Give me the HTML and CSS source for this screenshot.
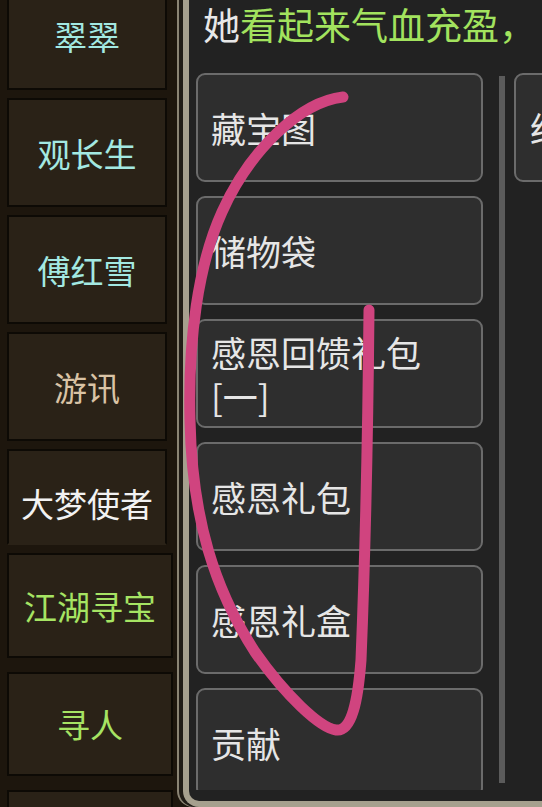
FILE: index.html
```html
<!DOCTYPE html>
<html lang="zh-CN">
<head>
  <meta charset="UTF-8" />
  <meta name="viewport" content="width=device-width, initial-scale=1" />
  <title>NPC</title>
  <link rel="stylesheet" href="styles.css">
</head>
<body>
  <div class="screen">
    <nav class="npc-list">
      <div class="npc npc-cyan">翠翠</div>
      <div class="npc npc-cyan">观长生</div>
      <div class="npc npc-cyan">傅红雪</div>
      <div class="npc npc-tan">游讯</div>
      <div class="npc npc-white">大梦使者</div>
      <div class="npc npc-green">江湖寻宝</div>
      <div class="npc npc-green">寻人</div>
      <div class="npc"></div>
    </nav>

    <section class="panel">
      <p class="panel-title"><span class="speaker">她</span><span class="status">看起来气血充盈，</span></p>
      <div class="panel-body">
        <div class="item-list">
          <div class="item">藏宝图</div>
          <div class="item">储物袋</div>
          <div class="item">感恩回馈礼包<br>[一]</div>
          <div class="item">感恩礼包</div>
          <div class="item">感恩礼盒</div>
          <div class="item">贡献</div>
        </div>
        <div class="scroll-bar"></div>
        <div class="item-list item-list-side">
          <div class="item">经验</div>
        </div>
      </div>
    </section>

    <!-- hand drawn mark on top of the screenshot -->
    <svg class="scribble" width="542" height="807" viewBox="0 0 542 807">
      <path d="M343,97 C300,102 250,150 222,212 C198,265 188,340 190,420 C192,520 215,590 255,652 C285,695 320,728 336,730 C352,732 358,700 361,660 C365,560 368,420 369,310"
            fill="none" stroke="#d0447f" stroke-width="11" stroke-linecap="round" stroke-linejoin="round" />
    </svg>
  </div>
</body>
</html>
```

FILE: styles.css
```css
body {
  margin: 0;
  background: #1d160d;
  font-family: "Noto Sans CJK SC", "Noto Sans", sans-serif;
}

.screen {
  position: relative;
  display: flex;
  width: 542px;
  height: 807px;
  overflow: hidden;
}

/* left npc column */
.npc-list {
  flex-shrink: 0;
  display: flex;
  flex-direction: column;
  gap: 8px;
  width: 183px;
  box-sizing: border-box;
  padding-left: 7px;
  margin-top: -19px;
}

.npc {
  flex-shrink: 0;
  display: flex;
  align-items: center;
  justify-content: center;
  width: 160px;
  height: 109px;
  box-sizing: border-box;
  background: #2a2217;
  border: 2px solid #0d0a05;
  font-size: 33px;
  color: #eeeeee;
}

.npc:nth-child(5) {
  height: 96px;
  padding-top: 12px;
  border-bottom-color: #2a2217;
}

.npc:nth-child(6) {
  width: 166px;
  height: 105px;
}

.npc:nth-child(7),
.npc:nth-child(8) {
  width: 166px;
  height: 104px;
  margin-top: 6px;
}

.npc-cyan {
  color: #a3e9e2;
}

.npc-tan {
  color: #d9c3a5;
}

.npc-white {
  color: #f2f2f2;
}

.npc-green {
  color: #a6e463;
}

/* main panel */
.panel {
  flex-shrink: 0;
  width: 359px;
  height: 807px;
  box-sizing: border-box;
  background: #222222;
  border-left: 6px solid #a6a08e;
  border-bottom: 6px solid #a6a08e;
  border-bottom-left-radius: 16px;
  box-shadow: -4px 0 0 0 #201c16, -6px 0 0 0 #8a8474;
  overflow: hidden;
}

.panel-title {
  margin: 0;
  padding-left: 14px;
  height: 48px;
  font-size: 37px;
  line-height: 48px;
  white-space: nowrap;
}

.speaker {
  color: #e8e8e8;
}

.status {
  color: #a2e35e;
}

.panel-body {
  display: flex;
  margin-top: 25px;
  padding-left: 7px;
  height: 717px;
  overflow: hidden;
}

.item-list {
  flex-shrink: 0;
  display: flex;
  flex-direction: column;
  gap: 14px;
  width: 287px;
}

.item {
  flex-shrink: 0;
  display: flex;
  align-items: center;
  height: 109px;
  box-sizing: border-box;
  padding: 0 13px;
  background: #2e2e2e;
  border: 2px solid #6b6b6b;
  border-radius: 9px;
  font-size: 35px;
  line-height: 44px;
  color: #e6e6e6;
  white-space: nowrap;
}

.scroll-bar {
  flex-shrink: 0;
  width: 6px;
  height: 707px;
  margin: 3px 9px 0 16px;
  background: #5b5b5b;
}

.item-list-side {
  width: 287px;
}

.item-list-side .item {
  padding-left: 14px;
}

.scribble {
  position: absolute;
  left: 0;
  top: 0;
  pointer-events: none;
}
```
